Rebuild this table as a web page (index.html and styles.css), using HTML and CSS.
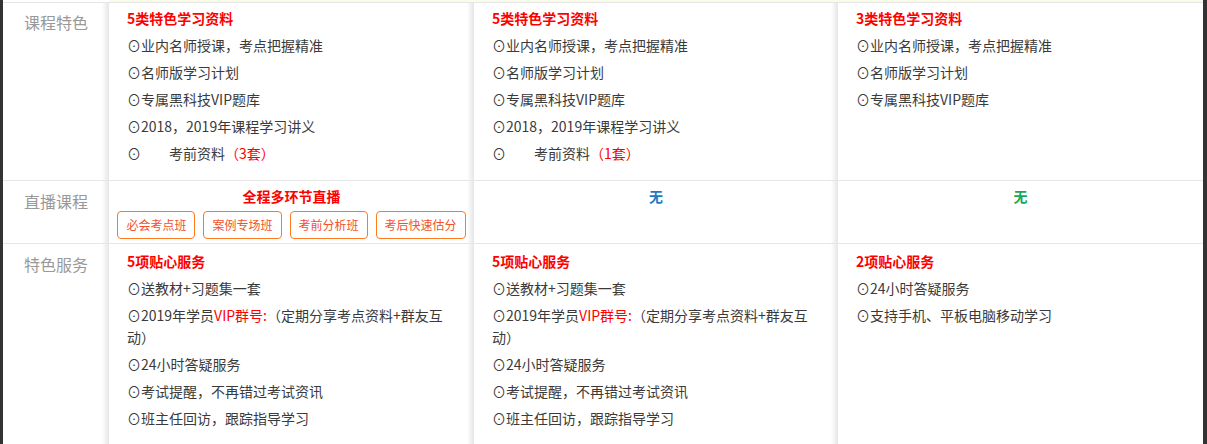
FILE: index.html
```html
<!DOCTYPE html>
<html lang="zh-CN">
<head>
<meta charset="utf-8">
<title>课程对比</title>
<link rel="stylesheet" href="styles.css">
</head>
<body>
<div class="page">
  <div class="topbar"><div class="tb-label"></div><div class="tb-fill"></div></div>

  <div class="row row-first">
    <div class="label shade">课程特色</div>
    <div class="cell shade">
      <div class="title">5类特色学习资料</div>
      <ul class="list">
        <li>⊙业内名师授课，考点把握精准</li>
        <li>⊙名师版学习计划</li>
        <li>⊙专属黑科技VIP题库</li>
        <li>⊙2018，2019年课程学习讲义</li>
        <li>⊙<span class="gap"></span>考前资料<span class="red">（3套）</span></li>
      </ul>
    </div>
    <div class="cell shade">
      <div class="title">5类特色学习资料</div>
      <ul class="list">
        <li>⊙业内名师授课，考点把握精准</li>
        <li>⊙名师版学习计划</li>
        <li>⊙专属黑科技VIP题库</li>
        <li>⊙2018，2019年课程学习讲义</li>
        <li>⊙<span class="gap"></span>考前资料<span class="red">（1套）</span></li>
      </ul>
    </div>
    <div class="cell">
      <div class="title">3类特色学习资料</div>
      <ul class="list">
        <li>⊙业内名师授课，考点把握精准</li>
        <li>⊙名师版学习计划</li>
        <li>⊙专属黑科技VIP题库</li>
      </ul>
    </div>
  </div>

  <div class="row row-live">
    <div class="label shade">直播课程</div>
    <div class="cell cell-center shade">
      <div class="title">全程多环节直播</div>
      <div class="tags">
        <span class="tag">必会考点班</span>
        <span class="tag">案例专场班</span>
        <span class="tag">考前分析班</span>
        <span class="tag">考后快速估分</span>
      </div>
    </div>
    <div class="cell cell-center shade">
      <div class="title none-blue">无</div>
    </div>
    <div class="cell cell-center">
      <div class="title none-green">无</div>
    </div>
  </div>

  <div class="row row-last">
    <div class="label shade">特色服务</div>
    <div class="cell shade">
      <div class="title">5项贴心服务</div>
      <ul class="list">
        <li>⊙送教材+习题集一套</li>
        <li>⊙2019年学员<span class="red">VIP群号:</span>（定期分享考点资料+群友互动）</li>
        <li>⊙24小时答疑服务</li>
        <li>⊙考试提醒，不再错过考试资讯</li>
        <li>⊙班主任回访，跟踪指导学习</li>
      </ul>
    </div>
    <div class="cell shade">
      <div class="title">5项贴心服务</div>
      <ul class="list">
        <li>⊙送教材+习题集一套</li>
        <li>⊙2019年学员<span class="red">VIP群号:</span>（定期分享考点资料+群友互动）</li>
        <li>⊙24小时答疑服务</li>
        <li>⊙考试提醒，不再错过考试资讯</li>
        <li>⊙班主任回访，跟踪指导学习</li>
      </ul>
    </div>
    <div class="cell">
      <div class="title">2项贴心服务</div>
      <ul class="list">
        <li>⊙24小时答疑服务</li>
        <li>⊙支持手机、平板电脑移动学习</li>
      </ul>
    </div>
  </div>
</div>
</body>
</html>
```

FILE: styles.css
```css
* {
  box-sizing: border-box;
  margin: 0;
  padding: 0;
}

html, body {
  height: 100%;
}

body {
  background: #333;
  font-family: "Noto Sans CJK SC", "Microsoft YaHei", sans-serif;
  font-size: 14px;
  color: #3a3a3a;
  overflow: hidden;
}

.page {
  margin: 0 4px 0 3px;
  height: 444px;
  background: #fff;
  display: flex;
  flex-direction: column;
  overflow: hidden;
}

.topbar {
  display: grid;
  grid-template-columns: 106px 1fr;
  height: 2px;
  flex: none;
}

.tb-fill {
  background: #fbfbe9;
}

.row {
  display: grid;
  grid-template-columns: 106px 365px 364px 365px;
  border-top: 1px solid #e6e6e6;
  flex: none;
}

.row-last {
  flex: 1;
}

.shade {
  background: linear-gradient(to left, rgba(0, 0, 0, 0.1), rgba(0, 0, 0, 0) 7px);
}

.label {
  font-size: 16px;
  line-height: 24px;
  color: #999;
  text-align: center;
  padding-top: 8px;
}

.row-first .label {
  padding-top: 7px;
}

.cell {
  padding: 6px 20px 14px 18px;
}

.row-first .cell {
  padding-top: 4px;
  padding-bottom: 16px;
}

.title {
  font-weight: bold;
  color: #f00;
  line-height: 22px;
}

.list {
  list-style: none;
}

.list li {
  line-height: 22px;
  margin-top: 5px;
}

.red {
  color: #f00;
}

.gap {
  display: inline-block;
  width: 28px;
}

.cell-center {
  text-align: center;
  padding: 4px 6px 4px 6px;
}

.tags {
  display: flex;
  justify-content: center;
  gap: 8px;
  margin-top: 4px;
}

.tag {
  display: inline-block;
  height: 28px;
  line-height: 26px;
  padding: 0 8px;
  border: 1px solid #ff7a1f;
  border-radius: 4px;
  font-size: 12px;
  color: #f4512a;
  white-space: nowrap;
}

.none-blue {
  color: #1f7bc1;
}

.none-green {
  color: #18a85a;
}
```
